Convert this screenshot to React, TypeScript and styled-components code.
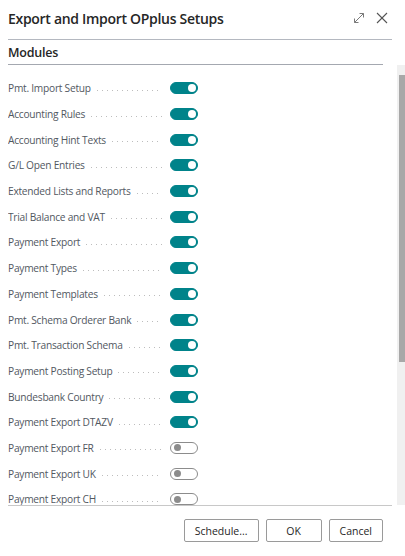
import styled, { createGlobalStyle } from "styled-components";

const GlobalStyle = createGlobalStyle`
  html, body {
    margin: 0;
    padding: 0;
    background: #ffffff;
  }
  body {
    font-family: "Open Sans", "Noto Sans", "Liberation Sans", sans-serif;
    color: #212121;
  }
`;

type Module = { name: string; on: boolean };

const MODULES: Module[] = [
  { name: "Pmt. Import Setup", on: true },
  { name: "Accounting Rules", on: true },
  { name: "Accounting Hint Texts", on: true },
  { name: "G/L Open Entries", on: true },
  { name: "Extended Lists and Reports", on: true },
  { name: "Trial Balance and VAT", on: true },
  { name: "Payment Export", on: true },
  { name: "Payment Types", on: true },
  { name: "Payment Templates", on: true },
  { name: "Pmt. Schema Orderer Bank", on: true },
  { name: "Pmt. Transaction Schema", on: true },
  { name: "Payment Posting Setup", on: true },
  { name: "Bundesbank Country", on: true },
  { name: "Payment Export DTAZV", on: true },
  { name: "Payment Export FR", on: false },
  { name: "Payment Export UK", on: false },
  { name: "Payment Export CH", on: false },
];

const ExpandIcon = () => (
  <svg width="12" height="12" viewBox="0 0 12 12" fill="none" stroke="#7a7a7a" strokeWidth="1">
    <path d="M1.5 10.5 L10.5 1.5" />
    <path d="M6.5 1.5 H10.5 V5.5" />
    <path d="M1.5 6.5 V10.5 H5.5" />
  </svg>
);

const CloseIcon = () => (
  <svg width="12" height="12" viewBox="0 0 12 12" fill="none" stroke="#555" strokeWidth="1.1">
    <path d="M1 1 L11 11" />
    <path d="M11 1 L1 11" />
  </svg>
);

const App = () => {
  return (
    <Dialog>
      <GlobalStyle />
      <Header>
        <Title>Export and Import OPplus Setups</Title>
        <HeaderActions>
          <IconButton aria-label="Expand">
            <ExpandIcon />
          </IconButton>
          <IconButton aria-label="Close">
            <CloseIcon />
          </IconButton>
        </HeaderActions>
      </Header>
      <SectionHeader>
        <SectionTitle>Modules</SectionTitle>
      </SectionHeader>
      <Body>
        <List>
          {MODULES.map((m) => (
            <Row key={m.name}>
              <Label>
                <LabelText>{m.name}</LabelText>
                <Leader />
              </Label>
              <Toggle $on={m.on}>
                <Knob $on={m.on} />
              </Toggle>
            </Row>
          ))}
        </List>
        <ScrollTrack>
          <ScrollThumb />
        </ScrollTrack>
      </Body>
      <Footer>
        <Button>Schedule...</Button>
        <Button $wide>OK</Button>
        <Button>Cancel</Button>
      </Footer>
    </Dialog>
  );
};

const Dialog = styled.div`
  width: 405px;
  height: 556px;
  display: flex;
  flex-direction: column;
  background: #fff;
  overflow: hidden;
`;

const Header = styled.div`
  height: 39px;
  margin: 0 13px 0 8px;
  display: flex;
  align-items: center;
  justify-content: space-between;
  border-bottom: 1px solid #b4b8c0;
`;

const Title = styled.div`
  font-size: 14px;
  font-weight: 600;
  color: #262626;
  letter-spacing: -0.3px;
  margin-top: -3px;
`;

const HeaderActions = styled.div`
  display: flex;
  align-items: center;
  gap: 11px;
  margin-right: 4px;
  margin-top: -3px;
`;

const IconButton = styled.button`
  border: none;
  background: none;
  padding: 0;
  width: 12px;
  height: 12px;
  display: flex;
`;

const SectionHeader = styled.div`
  height: 24px;
  margin: 0 22px 0 8px;
  display: flex;
  align-items: center;
  border-bottom: 1.5px solid #a4a8b0;
`;

const SectionTitle = styled.div`
  font-size: 12.5px;
  font-weight: 600;
  color: #262626;
  letter-spacing: -0.2px;
`;

const Body = styled.div`
  height: 440px;
  display: flex;
`;

const List = styled.div`
  flex: 1;
  overflow: hidden;
  padding: 10.5px 0 0 8px;
`;

const ScrollTrack = styled.div`
  width: 8px;
  background: #f0f0f0;
  padding-top: 10px;
  box-sizing: border-box;
  display: flex;
  justify-content: flex-end;
`;

const ScrollThumb = styled.div`
  width: 6px;
  height: 287px;
  background: #a8a8a8;
`;

const Row = styled.div`
  height: 25.7px;
  display: flex;
  align-items: center;
  gap: 8px;
`;

const Label = styled.div`
  width: 154px;
  display: flex;
  align-items: center;
  gap: 6px;
  overflow: hidden;
`;

const LabelText = styled.span`
  font-size: 10.2px;
  color: #52585f;
  white-space: nowrap;
  letter-spacing: -0.25px;
`;

const Leader = styled.span`
  flex: 1;
  height: 1px;
  margin-top: 4px;
  background-image: linear-gradient(to right, #bdbdbd 1px, transparent 1px);
  background-size: 5px 1px;
  background-repeat: repeat-x;
`;

const Toggle = styled.div<{ $on: boolean }>`
  flex: none;
  width: 28px;
  height: 12px;
  box-sizing: border-box;
  border-radius: 6px;
  background: ${(p) => (p.$on ? "#00838a" : "#ffffff")};
  border: 1px solid ${(p) => (p.$on ? "#00838a" : "#8c8c8c")};
  display: flex;
  align-items: center;
  justify-content: ${(p) => (p.$on ? "flex-end" : "flex-start")};
  padding: 0 1.5px;
`;

const Knob = styled.span<{ $on: boolean }>`
  width: ${(p) => (p.$on ? 8 : 7)}px;
  height: ${(p) => (p.$on ? 8 : 7)}px;
  border-radius: 50%;
  background: ${(p) => (p.$on ? "#ffffff" : "#8c8c8c")};
  margin: 0 ${(p) => (p.$on ? 0 : 1)}px;
`;

const Footer = styled.div`
  flex: 1;
  margin: 0 13px 0 8px;
  border-top: 1px solid #c8c8c8;
  display: flex;
  justify-content: flex-end;
  align-items: flex-start;
  gap: 7px;
  padding: 13px 9px 0 0;
`;

const Button = styled.button<{ $wide?: boolean }>`
  height: 23px;
  min-width: ${(p) => (p.$wide ? 56 : 50)}px;
  padding: 0 10px;
  border: 1px solid #9a9a9a;
  border-radius: 2px;
  background: #fff;
  font-family: "Open Sans", "Noto Sans", "Liberation Sans", sans-serif;
  font-size: 10.5px;
  color: #262626;
  box-sizing: border-box;
`;

export default App;
